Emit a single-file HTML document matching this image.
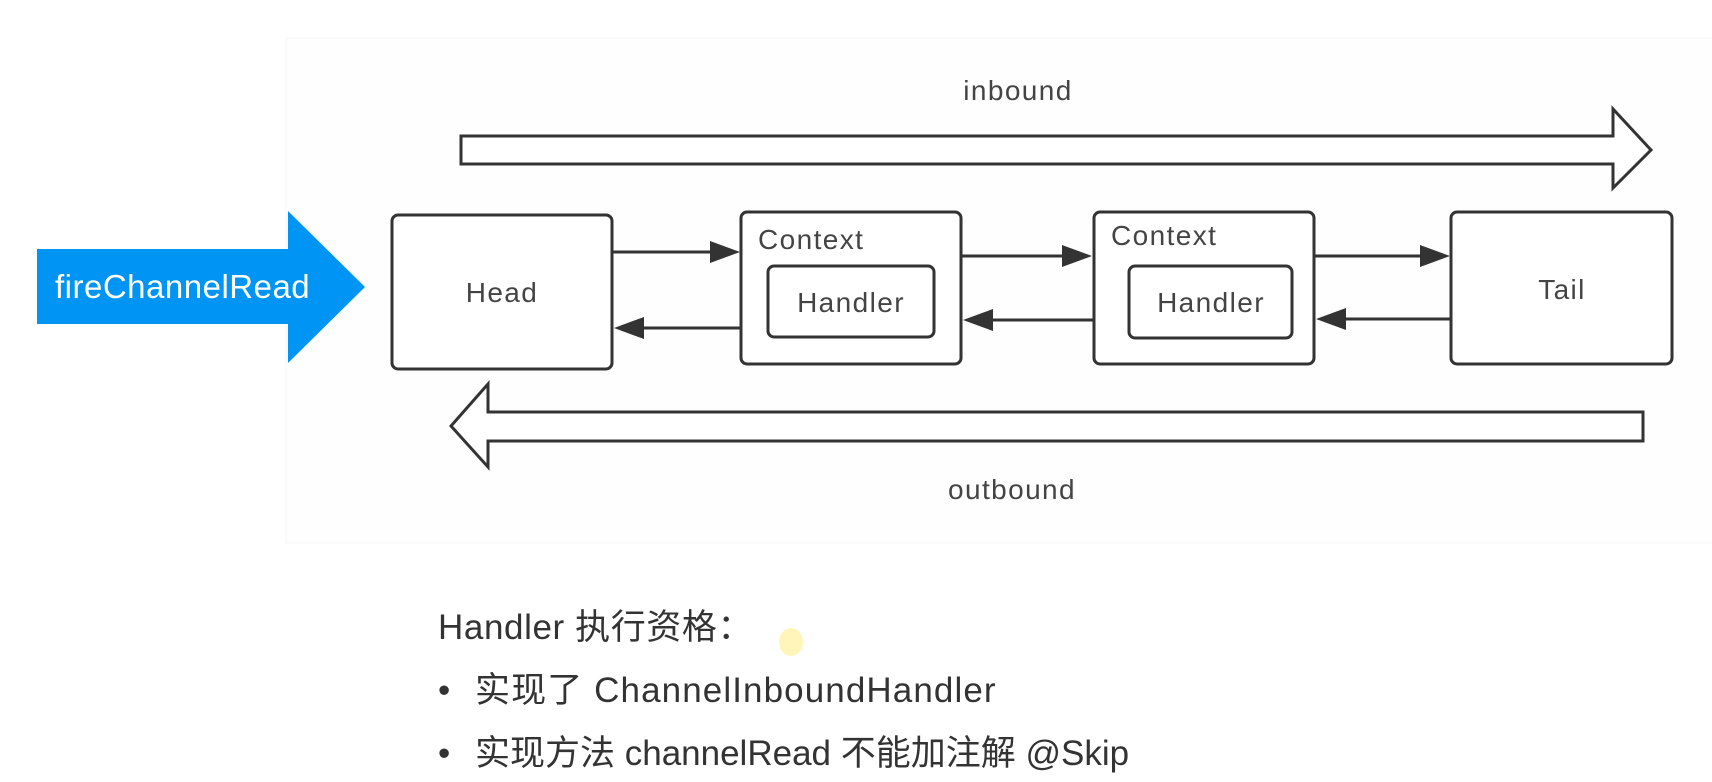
<!DOCTYPE html>
<html><head><meta charset="utf-8"><style>
html,body{margin:0;padding:0;background:#fff;width:1712px;height:782px;overflow:hidden}
svg{position:absolute;left:0;top:0}
.t{position:absolute;font-family:"Liberation Sans","Noto Sans CJK SC",sans-serif;white-space:nowrap;line-height:1;font-size:35px;color:#333;letter-spacing:0.6px}
</style></head><body>
<svg width="1712" height="782" viewBox="0 0 1712 782" font-family="Liberation Sans, sans-serif">
<rect x="286" y="38" width="1440" height="505" fill="#fefefe" stroke="#f5f5f5"/>
<polygon points="37,249 288,249 288,211 365,287 288,363 288,324 37,324" fill="#0095f5"/>
<text x="55" y="298" font-size="33" letter-spacing="0.5" fill="#fff">fireChannelRead</text>
<g stroke="#333" stroke-width="3" fill="#fff">
<polygon points="461,136 1613,136 1613,109 1651,150 1613,188 1613,164 461,164"/>
<polygon points="1643,412 488,412 488,384 451,426 488,467 488,441 1643,441"/>
<rect x="392" y="215" width="220" height="154" rx="6"/>
<rect x="741" y="212" width="220" height="152" rx="6"/>
<rect x="768" y="266" width="166" height="71" rx="6"/>
<rect x="1094" y="212" width="220" height="152" rx="6"/>
<rect x="1129" y="266" width="163" height="72" rx="6"/>
<rect x="1451" y="212" width="221" height="152" rx="6"/>
<line x1="613" y1="252" x2="715" y2="252"/>
<line x1="641" y1="328" x2="741" y2="328"/>
<line x1="962" y1="256" x2="1068" y2="256"/>
<line x1="992" y1="320" x2="1094" y2="320"/>
<line x1="1315" y1="256" x2="1426" y2="256"/>
<line x1="1345" y1="319" x2="1451" y2="319"/>
</g>
<g fill="#333">
<polygon points="740,252 710,241 710,263"/>
<polygon points="614,328 644,317 644,339"/>
<polygon points="1092,256 1062,245 1062,267"/>
<polygon points="963,320 993,309 993,331"/>
<polygon points="1450,256 1420,245 1420,267"/>
<polygon points="1316,319 1346,308 1346,330"/>
</g>
<g fill="#444" font-size="28" letter-spacing="1.4" text-anchor="middle">
<text x="1018" y="100">inbound</text>
<text x="1012" y="499">outbound</text>
<text x="502" y="302">Head</text>
<text x="851" y="312">Handler</text>
<text x="1211" y="312">Handler</text>
<text x="1562" y="299">Tail</text>
</g>
<g fill="#444" font-size="28" letter-spacing="1.4">
<text x="758" y="249">Context</text>
<text x="1111" y="245">Context</text>
</g>
<ellipse cx="791" cy="642" rx="12" ry="14" fill="#fff5b8"/>
</svg>
<div class="t" style="left:438px;top:610px">Handler 执行资格：</div>
<div class="t" style="left:438px;top:673px">•</div>
<div class="t" style="left:475px;top:673px;letter-spacing:1.1px">实现了 ChannelInboundHandler</div>
<div class="t" style="left:438px;top:736px">•</div>
<div class="t" style="left:475px;top:736px;letter-spacing:0px">实现方法 channelRead 不能加注解 @Skip</div>
</body></html>
